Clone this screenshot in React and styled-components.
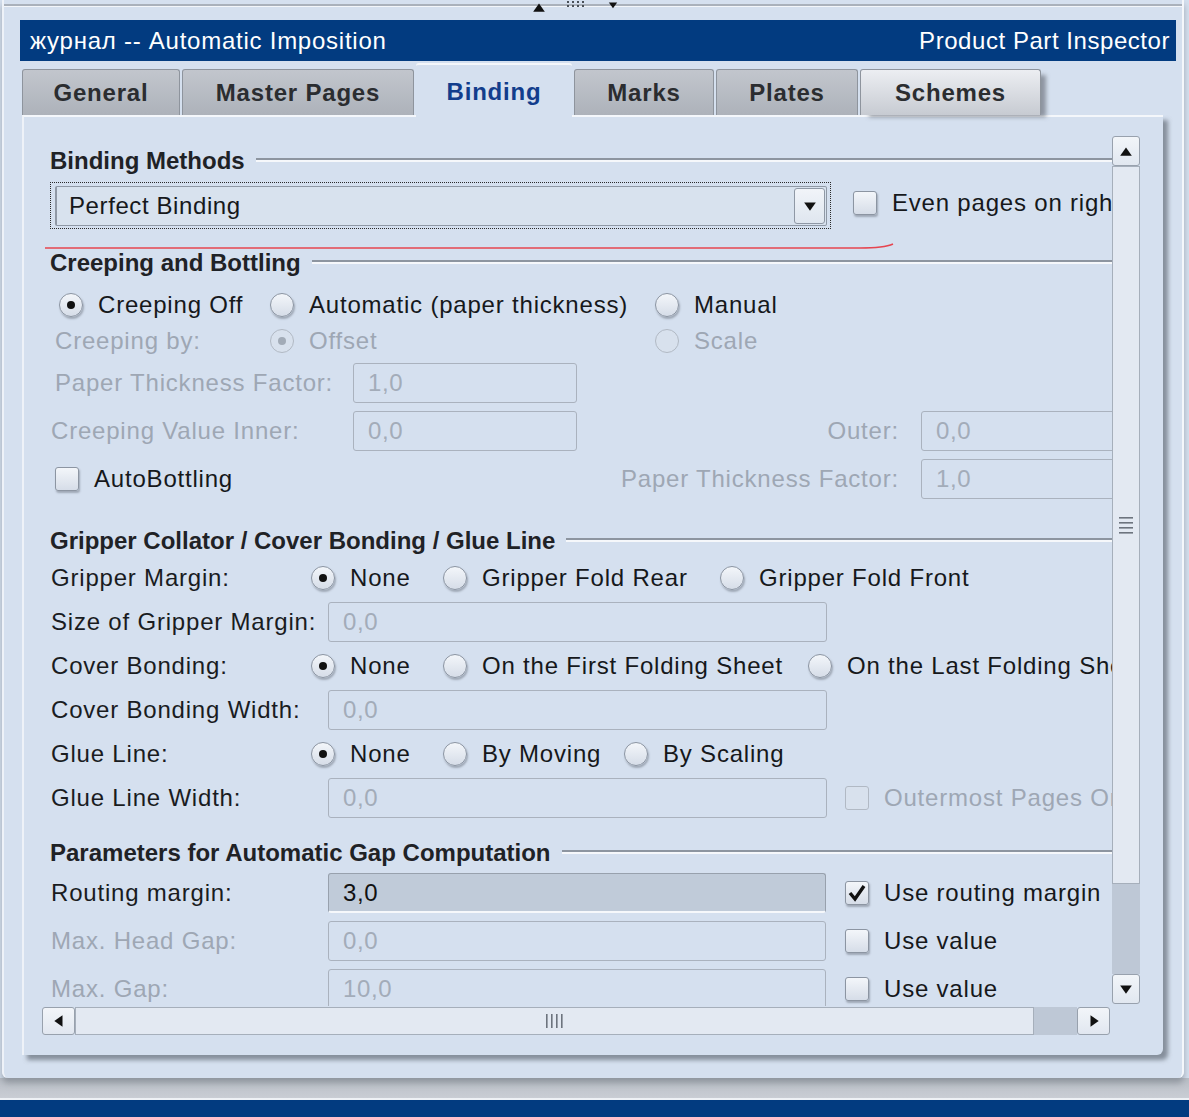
import React from "react";
import styled, { createGlobalStyle, css } from "styled-components";

const Global = createGlobalStyle`
  html, body { margin: 0; padding: 0; }
  body {
    background: #d5e0ef;
    font-family: "Liberation Sans", Arial, sans-serif;
    width: 1189px;
    height: 1117px;
    overflow: hidden;
  }
`;

const Screen = styled.div`
  width: 1189px;
  height: 1117px;
  display: flex;
  flex-direction: column;
  background: #d5e0ef;
  overflow: hidden;
`;

const Frame = styled.div`
  height: 1078px;
  width: 1182px;
  margin-left: 2px;
  box-sizing: border-box;
  border-left: 2px solid #eef2f8;
  border-right: 2px solid #f4f7fb;
  border-radius: 0 0 6px 6px;
  box-shadow: 0 5px 6px rgba(110, 116, 126, 0.55);
  display: flex;
  flex-direction: column;
  position: relative;
  z-index: 1;
`;

const BottomShade = styled.div`
  flex: 1;
  background: linear-gradient(#b9bec6, #c9cdd4);
  border-bottom: 2px solid #eef1f5;
`;

const BlueBar = styled.div`
  height: 17px;
  background: #023b80;
`;

const TopStrip = styled.div`
  height: 20px;
  display: flex;
  align-items: flex-start;
  padding-left: 528px;
  gap: 20px;
  background: linear-gradient(#d5e0ef 0 4px, #aab1bb 4px 6px, #f3f6fa 6px 7px, #d5e0ef 7px);
`;

const Window = styled.div`
  margin-left: 16px;
  width: 1156px;
  display: flex;
  flex-direction: column;
`;

const TitleBar = styled.div`
  height: 41px;
  background: #023b80;
  color: #fff;
  display: flex;
  align-items: center;
  justify-content: space-between;
  padding: 0 6px 0 10px;
  font-size: 24px;
  letter-spacing: 0.55px;
`;

const TitleLeft = styled.span`
  letter-spacing: 0.75px;
`;

const TabRow = styled.div`
  height: 53px;
  margin-top: 1px;
  display: flex;
  align-items: flex-end;
  gap: 2px;
  padding-left: 2px;
  position: relative;
  z-index: 2;
`;

const Tab = styled.div`
  width: ${(p) => p.$w}px;
  height: 46px;
  box-sizing: border-box;
  display: flex;
  align-items: center;
  justify-content: center;
  font-size: 24px;
  font-weight: bold;
  letter-spacing: 0.8px;
  color: #2b2d30;
  border: 1px solid #8e949d;
  border-bottom: none;
  border-radius: 3px 3px 0 0;
  background: linear-gradient(#c2c6cd, #adb2ba);
  ${(p) =>
    p.$hover &&
    css`
      background: linear-gradient(#eceef2, #c7cbd2);
      box-shadow: 7px 4px 4px -2px rgba(110, 116, 126, 0.7);
    `}
  ${(p) =>
    p.$active &&
    css`
      height: 54px;
      margin-bottom: -2px;
      background: #d5e0ef;
      border: none;
      border-top: 2px solid #f4f7fb;
      color: #123d8c;
      padding-top: 2px;
    `}
`;

const Panel = styled.div`
  margin-left: 2px;
  width: 1141px;
  height: 940px;
  box-sizing: border-box;
  background: #d5e0ef;
  border-top: 2px solid #f4f7fb;
  border-left: 2px solid #eef2f8;
  border-radius: 0 0 6px 0;
  box-shadow: 5px 5px 4px rgba(100, 108, 120, 0.7);
  padding: 19px 0 0 18px;
  position: relative;
  z-index: 1;
`;

const ScrollPane = styled.div`
  display: grid;
  grid-template-columns: 1070px 28px;
  grid-template-rows: 870px 28px;
`;

const Viewport = styled.div`
  overflow: hidden;
  position: relative;
`;

const Content = styled.div`
  width: 1300px;
  padding: 11px 0 0 8px;
  box-sizing: border-box;
`;

const Heading = styled.div`
  height: 28px;
  display: flex;
  align-items: center;
  gap: 11px;
  margin-top: ${(p) => p.$mt || 0}px;
  margin-bottom: ${(p) => p.$mb || 0}px;
  font-size: 24px;
  font-weight: bold;
  color: #1f2226;
  span { flex: none; }
  &::after {
    content: "";
    flex: 1;
    height: 0;
    margin-top: -3px;
    border-top: 2px solid #8d95a0;
    border-bottom: 2px solid #f6f8fb;
  }
`;

const Row = styled.div`
  height: ${(p) => p.$h}px;
  display: flex;
  align-items: center;
  padding-left: ${(p) => p.$indent || 0}px;
`;

const Label = styled.div`
  width: ${(p) => (p.$w ? `${p.$w}px` : "auto")};
  flex: none;
  font-size: 24px;
  letter-spacing: 0.8px;
  white-space: nowrap;
  color: ${(p) => (p.$off ? "#9ea7b4" : "#1a1c1f")};
  text-align: ${(p) => (p.$right ? "right" : "left")};
`;

const Option = styled.div`
  width: ${(p) => (p.$w ? `${p.$w}px` : "auto")};
  flex: none;
  display: flex;
  align-items: center;
  gap: 15px;
  font-size: 24px;
  letter-spacing: 0.8px;
  white-space: nowrap;
  margin-left: ${(p) => p.$ml || 0}px;
  margin-top: ${(p) => p.$mt || 0}px;
  color: ${(p) => (p.$off ? "#9ea7b4" : "#16181b")};
`;

const boxBase = css`
  width: 24px;
  height: 24px;
  box-sizing: border-box;
  flex: none;
  display: flex;
  align-items: center;
  justify-content: center;
  border: 1px solid ${(p) => (p.$off ? "#b1b9c4" : "#8c95a2")};
  background: ${(p) => (p.$off ? "#d8e1ed" : "linear-gradient(#f3f6fa, #d6dde8)")};
  box-shadow: ${(p) => (p.$off ? "none" : "1px 2px 2px rgba(60, 66, 76, 0.35)")};
`;

const RadioCircle = styled.div`
  ${boxBase}
  border-radius: 50%;
  &::after {
    content: "";
    display: ${(p) => (p.$on ? "block" : "none")};
    width: 8px;
    height: 8px;
    border-radius: 50%;
    background: ${(p) => (p.$off ? "#a2abb7" : "#111")};
  }
`;

const CheckSquare = styled.div`
  ${boxBase}
  border-radius: 3px;
`;

const Field = styled.div`
  width: ${(p) => p.$w}px;
  height: 40px;
  box-sizing: border-box;
  flex: none;
  display: flex;
  align-items: center;
  padding-left: 14px;
  font-size: 24px;
  letter-spacing: 0.6px;
  border: 1px solid #aab2be;
  border-radius: 3px;
  color: #a3acb9;
  background: #d5e0ef;
  margin-left: ${(p) => p.$ml || 0}px;
  margin-right: ${(p) => p.$mr || 0}px;
  ${(p) =>
    p.$edit &&
    css`
      background: #c0cbd9;
      color: #111;
      border-color: #98a1ad;
      border-bottom: 2px solid #f6f8fb;
    `}
`;

const FocusBox = styled.div`
  width: 781px;
  height: 47px;
  box-sizing: border-box;
  border: 1px dotted #2a2a2a;
  padding: 3px 3px 2px 4px;
  flex: none;
`;

const Combo = styled.div`
  height: 100%;
  box-sizing: border-box;
  display: flex;
  align-items: center;
  border: 1px solid #8f98a5;
  border-left: 2px solid #8f98a5;
  border-radius: 2px;
  background: #d8e2ee;
  font-size: 24px;
  letter-spacing: 0.6px;
  color: #16181b;
`;

const ComboText = styled.div`
  flex: 1;
  padding-left: 12px;
`;

const ArrowButton = styled.div`
  width: 31px;
  height: 36px;
  margin-right: 1px;
  box-sizing: border-box;
  display: flex;
  align-items: center;
  justify-content: center;
  border: 1px solid #8f98a5;
  border-radius: 3px;
  background: linear-gradient(#f1f4f9, #dfe6ef);
`;

const VScroll = styled.div`
  display: flex;
  flex-direction: column;
  height: 868px;
`;

const HScroll = styled.div`
  display: flex;
  width: 1068px;
  height: 28px;
  margin-top: 1px;
`;

const ScrollButton = styled.div`
  ${(p) => (p.$horizontal ? "width: 33px; height: 100%;" : "height: 30px; width: 100%;")}
  flex: none;
  box-sizing: border-box;
  display: flex;
  align-items: center;
  justify-content: center;
  border: 1px solid #98a1ad;
  border-radius: 3px;
  background: linear-gradient(#f2f5f9, #e1e7f0);
`;

const Thumb = styled.div`
  flex: ${(p) => p.$size} 0 0;
  box-sizing: border-box;
  display: flex;
  align-items: center;
  justify-content: center;
  border: 1px solid #a6afbb;
  background: #e3e9f2;
`;

const Track = styled.div`
  flex: ${(p) => p.$size} 0 0;
  background: #bec8d6;
`;

const Annotation = styled.svg`
  position: absolute;
  left: 0;
  top: 105px;
  pointer-events: none;
`;

const Tri = ({ dir, size = 12 }) => {
  const pts = {
    up: "1,10 11,10 6,3",
    down: "1,3 11,3 6,10",
    left: "9,1 9,11 2,6",
    right: "3,1 3,11 10,6",
  }[dir];
  return (
    <svg width={size} height={size} viewBox="0 0 12 12">
      <polygon points={pts} fill="#111" />
    </svg>
  );
};

const Radio = ({ on, off, w, children }) => (
  <Option $w={w} $off={off}>
    <RadioCircle $on={on} $off={off} />
    {children}
  </Option>
);

const Check = ({ on, off, w, ml, mt, children }) => (
  <Option $w={w} $off={off} $ml={ml} $mt={mt}>
    <CheckSquare $off={off}>
      {on && (
        <svg width="20" height="20" viewBox="0 0 20 20">
          <polyline points="3,10 8,16 17,3" fill="none" stroke="#111" strokeWidth="3.4" />
        </svg>
      )}
    </CheckSquare>
    {children}
  </Option>
);

const tabs = [
  { name: "General", w: 158 },
  { name: "Master Pages", w: 232 },
  { name: "Binding", w: 156, active: true },
  { name: "Marks", w: 140 },
  { name: "Plates", w: 142 },
  { name: "Schemes", w: 181, hover: true },
];

export default function App() {
  return (
    <>
      <Global />
      <Screen>
        <Frame>
          <TopStrip>
            <Tri dir="up" size={14} />
            <svg width="22" height="8" viewBox="0 0 22 8">
              {[1, 6, 11, 16].map((x) => (
                <g key={x}>
                  <rect x={x} y="1" width="2" height="2" fill="#4a5058" />
                  <rect x={x} y="5" width="2" height="2" fill="#4a5058" />
                </g>
              ))}
            </svg>
            <Tri dir="down" size={10} />
          </TopStrip>
          <Window>
            <TitleBar>
              <TitleLeft>журнал -- Automatic Imposition</TitleLeft>
              <span>Product Part Inspector</span>
            </TitleBar>
            <TabRow>
              {tabs.map((t) => (
                <Tab key={t.name} $w={t.w} $active={t.active} $hover={t.hover}>
                  {t.name}
                </Tab>
              ))}
            </TabRow>
            <Panel>
              <ScrollPane>
                <Viewport>
                  <Content>
                    <Heading $mb={7}>
                      <span>Binding Methods</span>
                    </Heading>
                    <Row $h={47}>
                      <FocusBox>
                        <Combo>
                          <ComboText>Perfect Binding</ComboText>
                          <ArrowButton>
                            <Tri dir="down" size={14} />
                          </ArrowButton>
                        </Combo>
                      </FocusBox>
                      <Check ml={22} mt={-5}>Even pages on right</Check>
                    </Row>

                    <Heading $mt={20} $mb={10}>
                      <span>Creeping and Bottling</span>
                    </Heading>
                    <Row $h={36} $indent={9}>
                      <Radio on w={211}>Creeping Off</Radio>
                      <Radio w={385}>Automatic (paper thickness)</Radio>
                      <Radio>Manual</Radio>
                    </Row>
                    <Row $h={36} $indent={5}>
                      <Label $off $w={215}>Creeping by:</Label>
                      <Radio on off w={385}>Offset</Radio>
                      <Radio off>Scale</Radio>
                    </Row>
                    <Row $h={48} $indent={5}>
                      <Label $off $w={298}>Paper Thickness Factor:</Label>
                      <Field $w={224}>1,0</Field>
                    </Row>
                    <Row $h={48} $indent={1}>
                      <Label $off $w={302}>Creeping Value Inner:</Label>
                      <Field $w={224}>0,0</Field>
                      <Label $off $right $w={322}>Outer:</Label>
                      <Field $w={224} $ml={22}>0,0</Field>
                    </Row>
                    <Row $h={48} $indent={5}>
                      <Check w={522}>AutoBottling</Check>
                      <Label $off $right $w={322}>Paper Thickness Factor:</Label>
                      <Field $w={224} $ml={22}>1,0</Field>
                    </Row>

                    <Heading $mt={24} $mb={1}>
                      <span>Gripper Collator / Cover Bonding / Glue Line</span>
                    </Heading>
                    <Row $h={44} $indent={1}>
                      <Label $w={260}>Gripper Margin:</Label>
                      <Radio on w={132}>None</Radio>
                      <Radio w={277}>Gripper Fold Rear</Radio>
                      <Radio>Gripper Fold Front</Radio>
                    </Row>
                    <Row $h={44} $indent={1}>
                      <Label $w={277}>Size of Gripper Margin:</Label>
                      <Field $w={499}>0,0</Field>
                    </Row>
                    <Row $h={44} $indent={1}>
                      <Label $w={260}>Cover Bonding:</Label>
                      <Radio on w={132}>None</Radio>
                      <Radio w={365}>On the First Folding Sheet</Radio>
                      <Radio>On the Last Folding Sheet</Radio>
                    </Row>
                    <Row $h={44} $indent={1}>
                      <Label $w={277}>Cover Bonding Width:</Label>
                      <Field $w={499}>0,0</Field>
                    </Row>
                    <Row $h={44} $indent={1}>
                      <Label $w={260}>Glue Line:</Label>
                      <Radio on w={132}>None</Radio>
                      <Radio w={181}>By Moving</Radio>
                      <Radio>By Scaling</Radio>
                    </Row>
                    <Row $h={44} $indent={1}>
                      <Label $w={277}>Glue Line Width:</Label>
                      <Field $w={499} $mr={18}>0,0</Field>
                      <Check off>Outermost Pages Only</Check>
                    </Row>

                    <Heading $mt={19} $mb={2}>
                      <span>Parameters for Automatic Gap Computation</span>
                    </Heading>
                    <Row $h={48} $indent={1}>
                      <Label $w={277}>Routing margin:</Label>
                      <Field $w={498} $mr={19} $edit>3,0</Field>
                      <Check on>Use routing margin</Check>
                    </Row>
                    <Row $h={48} $indent={1}>
                      <Label $off $w={277}>Max. Head Gap:</Label>
                      <Field $w={498} $mr={19}>0,0</Field>
                      <Check>Use value</Check>
                    </Row>
                    <Row $h={48} $indent={1}>
                      <Label $off $w={277}>Max. Gap:</Label>
                      <Field $w={498} $mr={19}>10,0</Field>
                      <Check>Use value</Check>
                    </Row>
                  </Content>
                  <Annotation width="860" height="12" viewBox="0 0 860 12">
                    <path d="M3 7 L818 7 Q842 7 851 3" fill="none" stroke="#e64550" strokeWidth="1.6" />
                  </Annotation>
                </Viewport>

                <VScroll>
                  <ScrollButton>
                    <Tri dir="up" size={14} />
                  </ScrollButton>
                  <Thumb $size={717}>
                    <svg width="16" height="20" viewBox="0 0 16 20">
                      {[2, 7, 12, 17].map((y) => (
                        <rect key={y} x="1" y={y} width="14" height="1.6" fill="#6d747e" />
                      ))}
                    </svg>
                  </Thumb>
                  <Track $size={90} />
                  <ScrollButton>
                    <Tri dir="down" size={14} />
                  </ScrollButton>
                </VScroll>

                <HScroll>
                  <ScrollButton $horizontal>
                    <Tri dir="left" size={14} />
                  </ScrollButton>
                  <Thumb $size={957}>
                    <svg width="22" height="16" viewBox="0 0 22 16">
                      {[2, 7, 12, 17].map((x) => (
                        <rect key={x} x={x} y="1" width="1.6" height="14" fill="#6d747e" />
                      ))}
                    </svg>
                  </Thumb>
                  <Track $size={43} />
                  <ScrollButton $horizontal>
                    <Tri dir="right" size={14} />
                  </ScrollButton>
                </HScroll>
              </ScrollPane>
            </Panel>
          </Window>
        </Frame>
        <BottomShade />
        <BlueBar />
      </Screen>
    </>
  );
}
